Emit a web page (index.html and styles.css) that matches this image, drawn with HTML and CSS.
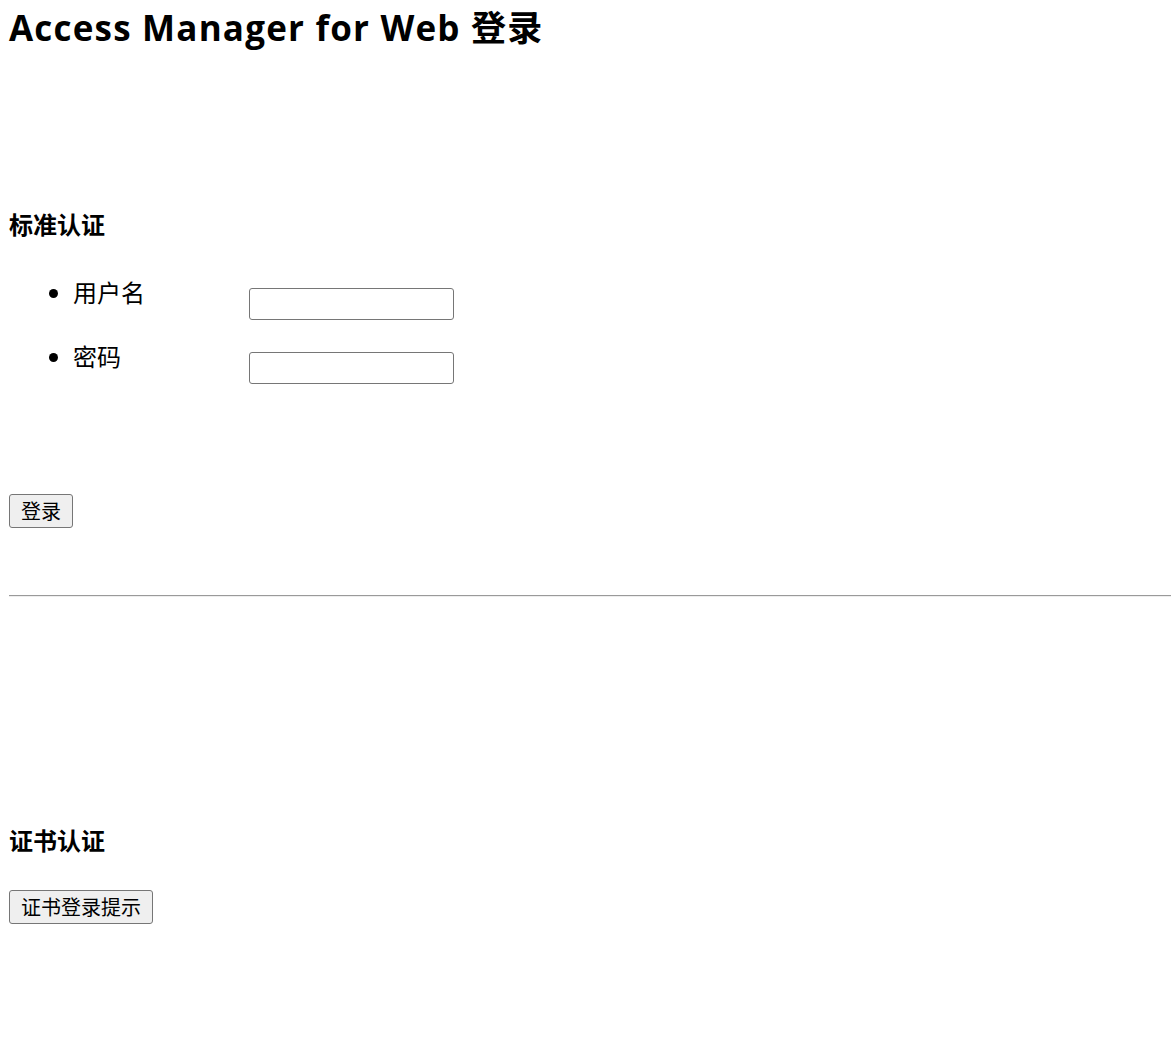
FILE: index.html
```html
<!DOCTYPE html>
<html lang="zh-CN">
<head>
<meta charset="utf-8">
<title>Access Manager for Web 登录</title>
<link rel="stylesheet" href="styles.css">
</head>
<body>
<h1 class="title">Access Manager for Web 登录</h1>
<form class="std">
  <h3 class="sec-title">标准认证</h3>
  <ul class="fields">
    <li class="field"><span class="label">用户名</span><input class="text-input" type="text"></li>
    <li class="field"><span class="label">密码</span><input class="text-input" type="password"></li>
  </ul>
  <div class="actions"><button class="btn" type="button">登录</button></div>
</form>
<hr class="sep">
<div class="cert">
  <h3 class="sec-title">证书认证</h3>
  <button class="btn" type="button">证书登录提示</button>
</div>
</body>
</html>
```
FILE: styles.css
```css
html, body {
  margin: 0;
  padding: 0;
  background: #fff;
  color: #000;
}
body {
  padding-left: 9px;
  font-family: "Open Sans", "Noto Sans CJK SC", sans-serif;
}
.title {
  margin: 0;
  padding-top: 6px;
  font-size: 35px;
  line-height: 44px;
  font-weight: 700;
  letter-spacing: 1.2px;
}
.std {
  margin: 0;
  padding-top: 158px;
}
.sec-title {
  margin: 0;
  font-size: 24px;
  line-height: 34px;
  font-weight: 700;
}
.fields {
  margin: 34px 0 0 0;
  padding: 0 0 0 64px;
  list-style: disc;
}
.field {
  font-size: 24px;
  line-height: 34px;
  height: 64px;
}
.label {
  display: inline-block;
  width: 176px;
  vertical-align: top;
}
.text-input {
  display: inline-block;
  vertical-align: top;
  box-sizing: border-box;
  width: 205px;
  height: 32px;
  margin-top: 12px;
  border: 1px solid #767676;
  border-radius: 3px;
  padding: 0 3px;
  font-size: 20px;
  background: #fff;
}
.actions {
  margin-top: 90px;
}
.btn {
  box-sizing: border-box;
  height: 34px;
  padding: 0 11px;
  margin: 0;
  border: 1px solid #767676;
  border-radius: 3px;
  background: #efefef;
  color: #000;
  font-family: "Noto Sans CJK SC", sans-serif;
  font-size: 20px;
  line-height: 30px;
}
.sep {
  margin: 67px 0 0 0;
  height: 0;
  border: 0;
  border-top: 1px solid #9a9a9a;
  border-bottom: 1px solid #eeeeee;
}
.cert {
  padding-top: 227px;
}
.cert .sec-title {
  margin-bottom: 32px;
}
```
